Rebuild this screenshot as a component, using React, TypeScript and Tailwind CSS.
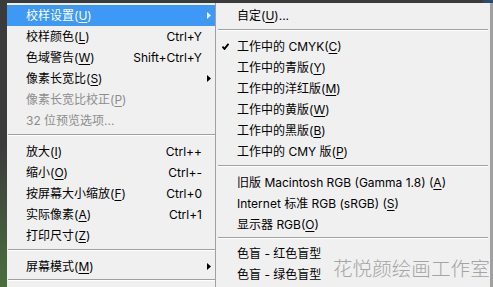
import React from 'react'

type Item =
  | { sep: true; pt?: string; h?: string }
  | {
      sep?: false
      label: string
      key?: string
      tail?: string
      shortcut?: string
      sub?: boolean
      disabled?: boolean
      active?: boolean
      checked?: boolean
    }

const leftItems: Item[] = [
  { label: '校样设置(', key: 'U', tail: ')', sub: true, active: true },
  { label: '校样颜色(', key: 'L', tail: ')', shortcut: 'Ctrl+Y' },
  { label: '色域警告(', key: 'W', tail: ')', shortcut: 'Shift+Ctrl+Y' },
  { label: '像素长宽比(', key: 'S', tail: ')', sub: true },
  { label: '像素长宽比校正(', key: 'P', tail: ')', disabled: true },
  { label: '32 位预览选项...', disabled: true },
  { sep: true },
  { label: '放大(', key: 'I', tail: ')', shortcut: 'Ctrl++' },
  { label: '缩小(', key: 'O', tail: ')', shortcut: 'Ctrl+-' },
  { label: '按屏幕大小缩放(', key: 'F', tail: ')', shortcut: 'Ctrl+0' },
  { label: '实际像素(', key: 'A', tail: ')', shortcut: 'Ctrl+1' },
  { label: '打印尺寸(', key: 'Z', tail: ')' },
  { sep: true },
  { label: '屏幕模式(', key: 'M', tail: ')', sub: true },
  { sep: true, pt: 'pt-[2px]' },
]

const subItems: Item[] = [
  { label: '自定(', key: 'U', tail: ')...' },
  { sep: true },
  { label: '工作中的 CMYK(', key: 'C', tail: ')', checked: true },
  { label: '工作中的青版(', key: 'Y', tail: ')' },
  { label: '工作中的洋红版(', key: 'M', tail: ')' },
  { label: '工作中的黄版(', key: 'W', tail: ')' },
  { label: '工作中的黑版(', key: 'B', tail: ')' },
  { label: '工作中的 CMY 版(', key: 'P', tail: ')' },
  { sep: true },
  { label: '旧版 Macintosh RGB (Gamma 1.8) (', key: 'A', tail: ')' },
  { label: 'Internet 标准 RGB (sRGB) (', key: 'S', tail: ')' },
  { label: '显示器 RGB(', key: 'O', tail: ')' },
  { sep: true, pt: 'pt-[2px]', h: 'h-[8px]' },
  { label: '色盲 - 红色盲型' },
  { label: '色盲 - 绿色盲型' },
]

const Label = ({ it }: { it: Extract<Item, { label: string }> }) => (
  <span className="whitespace-nowrap">
    {it.label}
    {it.key && <u className="underline-offset-2">{it.key}</u>}
    {it.tail}
  </span>
)

const Arrow = ({ white }: { white?: boolean }) => (
  <svg width="4" height="7" viewBox="0 0 4 7">
    <path d="M0 0 L4 3.5 L0 7 Z" fill={white ? '#ffffff' : '#000000'} />
  </svg>
)

const Check = () => (
  <svg width="7" height="7" viewBox="0 0 7 7">
    <path d="M0.5 3.6 L2.5 5.9 L6.5 0.8" stroke="#000" strokeWidth="1.9" fill="none" />
  </svg>
)

const Separator = ({ pt = 'pt-[3px]', h = 'h-[10px]', inset = 'ml-[1px]' }: { pt?: string; h?: string; inset?: string }) => (
  <div className={`${h} ${pt} ${inset}`}>
    <div className="border-t border-b border-t-[#a0a0a0] border-b-white" />
  </div>
)

const LeftMenu = () => (
  <div className="w-[209px] shrink-0 border-r border-[#a0a0a0] bg-[#f0f0f0] pt-[2px]">
    {leftItems.map((it, i) =>
      it.sep ? (
        <Separator key={i} pt={it.pt} />
      ) : (
        <div
          key={i}
          className={`flex h-[21px] items-center leading-[21px] ${
            it.active ? 'bg-[#3d98f6] text-white' : it.disabled ? 'text-[#8d8d8d]' : 'text-black'
          }`}
        >
          <div className="flex-1 pl-[19px]">
            <Label it={it} />
          </div>
          {it.shortcut && <span className="whitespace-nowrap">{it.shortcut}</span>}
          <div className="flex w-[13px] items-center pl-[5px]">{it.sub && <Arrow white={it.active} />}</div>
        </div>
      ),
    )}
  </div>
)

const SubMenu = () => (
  <div className="flex-1 border-r-[3px] border-[#a0a0a0] bg-[#f0f0f0] pt-[2px]">
    {subItems.map((it, i) =>
      it.sep ? (
        <Separator key={i} pt={it.pt} h={it.h} inset="mx-[2px]" />
      ) : (
        <div key={i} className="flex h-[21px] items-center leading-[21px] text-black">
          <div className="flex w-[21px] items-center pl-[6px]">{it.checked && <Check />}</div>
          <Label it={it} />
        </div>
      ),
    )}
  </div>
)

export default function App() {
  return (
    <div className="relative flex h-[287px] w-[493px] flex-col overflow-hidden bg-[#3b3b3b] font-['Inter','Noto_Sans_CJK_SC',sans-serif] text-[12px]">
      <div className="flex h-[3px] shrink-0">
        <div className="flex-1 bg-[#3b3b3b]" />
        <div className="w-[10px] bg-[#2d4a6a]" />
      </div>
      <div className="flex flex-1">
        <div className="w-[7px] shrink-0 bg-gradient-to-b from-[#3b3b3b] via-[#3b3b3b] to-[#4a6e3c]" />
        <LeftMenu />
        <SubMenu />
      </div>
      <div className="pointer-events-none absolute left-[333px] top-[257px] whitespace-nowrap font-['Noto_Sans_CJK_SC',sans-serif] text-[19.6px] font-extralight leading-[22px] text-[#a4a4a4]">
        花悦颜绘画工作室
      </div>
    </div>
  )
}
